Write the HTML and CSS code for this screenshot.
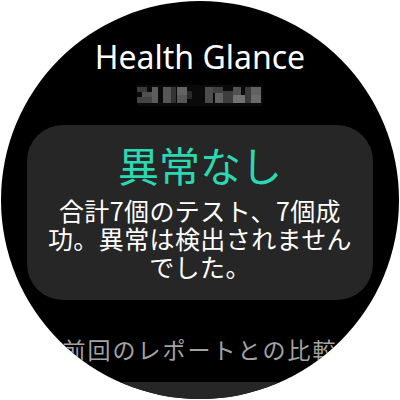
FILE: index.html
```html
<!DOCTYPE html>
<html lang="ja">
<head>
<meta charset="utf-8">
<link rel="stylesheet" href="styles.css">
</head>
<body>
<div class="watch">
  <div class="title">Health Glance</div>
  <svg class="date" width="126" height="21" viewBox="0 0 126 21">
    <rect x="0" y="0" width="126" height="21" fill="#0a0a0a"/>
    <rect x="0" y="2" width="10" height="5" fill="#3a3a3a"/>
    <rect x="5" y="7" width="10" height="5" fill="#505050"/>
    <rect x="0" y="12" width="15" height="6" fill="#444"/>
    <rect x="15" y="2" width="6" height="16" fill="#5c5c5c"/>
    <rect x="26" y="2" width="8" height="16" fill="#565656"/>
    <rect x="34" y="2" width="5" height="16" fill="#333"/>
    <rect x="40" y="2" width="10" height="8" fill="#636363"/>
    <rect x="40" y="10" width="10" height="8" fill="#575757"/>
    <rect x="50" y="6" width="5" height="8" fill="#2a2a2a"/>
    <rect x="68" y="2" width="8" height="16" fill="#4c4c4c"/>
    <rect x="76" y="2" width="10" height="6" fill="#404040"/>
    <rect x="78" y="8" width="8" height="10" fill="#616161"/>
    <rect x="86" y="6" width="10" height="12" fill="#3e3e3e"/>
    <rect x="96" y="2" width="8" height="8" fill="#525252"/>
    <rect x="96" y="10" width="12" height="8" fill="#727272"/>
    <rect x="108" y="2" width="6" height="16" fill="#3a3a3a"/>
    <rect x="114" y="2" width="10" height="8" fill="#626262"/>
    <rect x="114" y="10" width="10" height="8" fill="#6a6a6a"/>
  </svg>
  <div class="card">
    <div class="status">異常なし</div>
    <div class="desc">合計7個のテスト、7個成<br>功。異常は検出されません<br>でした。</div>
  </div>
  <div class="sub">前回のレポートとの比較</div>
  <div class="card2"></div>
</div>
</body>
</html>
```

FILE: styles.css
```css
html, body {
  margin: 0;
  padding: 0;
  background: #fff;
}
.watch {
  width: 398px;
  height: 398px;
  margin: 1px;
  border-radius: 50%;
  background: #000;
  overflow: hidden;
  display: flex;
  flex-direction: column;
  align-items: center;
  font-family: "Noto Sans", "Noto Sans CJK JP", sans-serif;
  color: #fff;
}
.title {
  margin-top: 36px;
  font-size: 32px;
  line-height: 40px;
  height: 40px;
  white-space: nowrap;
}
.date {
  display: block;
  margin-top: 8px;
  flex: none;
}
.card {
  flex: none;
  margin-top: 19px;
  width: 346px;
  height: 175px;
  box-sizing: border-box;
  padding-top: 15px;
  border-radius: 36px;
  background: #262626;
  text-align: center;
  font-family: "Noto Sans CJK JP", sans-serif;
}
.status {
  font-size: 41px;
  line-height: 48px;
  color: #2bd8b4;
}
.desc {
  margin-top: 8px;
  font-size: 25px;
  line-height: 28px;
  letter-spacing: 0.4px;
  white-space: nowrap;
}
.sub {
  flex: none;
  margin-top: 34px;
  font-family: "Noto Sans CJK JP", sans-serif;
  font-size: 23px;
  line-height: 30px;
  letter-spacing: 2px;
  color: #a3a3a3;
  white-space: nowrap;
}
.card2 {
  flex: none;
  margin-top: 18px;
  width: 346px;
  height: 80px;
  border-radius: 36px;
  background: #262626;
}
```
